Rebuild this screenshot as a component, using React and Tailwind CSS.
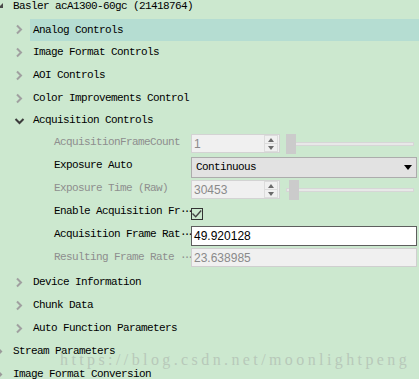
import React from 'react';

const mono = "font-['Liberation_Mono',monospace] text-[11px] tracking-[-0.6px]";
const sans = "font-['Liberation_Sans',Arial,sans-serif] text-[12px] tracking-normal";

function RootRow({ label, open }) {
  return (
    <div className="flex h-[23px] items-center text-black">
      <svg width="13" height="23" viewBox="0 0 13 23" className="shrink-0 overflow-visible">
        {open ? (
          <path d="M3 8 L3 13 L-2 13 Z" fill="#4a4a4a" />
        ) : (
          <path d="M-3 6 L2.5 11.5 L-3 17 Z" fill="#9a9a9a" />
        )}
      </svg>
      <span className="whitespace-nowrap">{label}</span>
    </div>
  );
}

function GroupRow({ label, selected }) {
  return (
    <div className="flex h-[23px] text-black">
      <svg width="30" height="23" viewBox="0 0 30 23" className="shrink-0">
        <path d="M17 7.5 L21 11.5 L17 15.5" stroke="#a0a0a0" strokeWidth="2" fill="none" />
      </svg>
      <div
        className={
          selected
            ? 'mt-px flex h-[22px] flex-1 items-center bg-[#b5ddd2] pl-[3px]'
            : 'flex flex-1 items-center pl-[3px]'
        }
      >
        <span className="whitespace-nowrap">{label}</span>
      </div>
    </div>
  );
}

function Dots() {
  return <span className="tracking-[-3px]">···</span>;
}

function PropRow({ label, dim, children }) {
  return (
    <div className="flex h-[23px] items-center pl-[54px]">
      <div className={`w-[137px] shrink-0 whitespace-nowrap ${dim ? 'text-[#8e8e8e]' : 'text-black'}`}>
        {label}
      </div>
      <div className="flex w-[226px] items-center">{children}</div>
    </div>
  );
}

function SpinBox({ value }) {
  return (
    <div className="mt-[2px] flex h-[19px] w-[89px] shrink-0 items-center border border-[#d3d3d3] bg-[#f0f0f0]">
      <span className={`flex-1 pl-[2px] text-[#8a8a8a] ${sans}`}>{value}</span>
      <div className="mr-px flex h-[17px] w-[14px] flex-col border border-[#dcdcdc]">
        <div className="flex flex-1 items-center justify-center border-b border-[#dcdcdc]">
          <svg width="6" height="4" viewBox="0 0 6 4">
            <path d="M0 4 L3 0 L6 4 Z" fill="#6b6b6b" />
          </svg>
        </div>
        <div className="flex flex-1 items-center justify-center">
          <svg width="6" height="4" viewBox="0 0 6 4">
            <path d="M0 0 L6 0 L3 4 Z" fill="#6b6b6b" />
          </svg>
        </div>
      </div>
    </div>
  );
}

function Slider({ offset }) {
  return (
    <div className="relative ml-[6px] mr-[3px] mt-[2px] flex h-[20px] flex-1 items-center">
      <div className="h-[4px] w-full border border-[#d6d6d6] bg-[#e8e8e8]" />
      <div className="absolute top-0 h-[20px] w-[10px] bg-[#cbcbcb]" style={{ left: offset }} />
    </div>
  );
}

export default function App() {
  return (
    <div className={`relative h-[379px] w-[419px] overflow-hidden bg-[#cce8cf] ${mono}`}>
      <div className="mt-[-5px]">
        <RootRow label="Basler acA1300-60gc (21418764)" open />
        <GroupRow label="Analog Controls" selected />
        <GroupRow label="Image Format Controls" />
        <GroupRow label="AOI Controls" />
        <GroupRow label="Color Improvements Control" />

        <div className="flex h-[21px] text-black">
          <svg width="30" height="21" viewBox="0 0 30 21" className="shrink-0">
            <path d="M15.5 9 L19.5 13 L23.5 9" stroke="#3c3c3c" strokeWidth="2" fill="none" />
          </svg>
          <div className="flex flex-1 items-center pl-[3px]">Acquisition Controls</div>
        </div>

        {/* property grid */}
        <div className="mb-[2px]">
          <PropRow label="AcquisitionFrameCount" dim>
            <SpinBox value="1" />
            <Slider offset={0} />
          </PropRow>
          <PropRow label="Exposure Auto">
            <div className="mt-[4px] flex h-[21px] w-full items-center justify-between border border-[#acacac] bg-[#e2e2e2] pl-[4px] pr-[4px] text-black">
              <span>Continuous</span>
              <svg width="8" height="5" viewBox="0 0 8 5">
                <path d="M0 0 H8 L4 5 Z" fill="#000" />
              </svg>
            </div>
          </PropRow>
          <PropRow label="Exposure Time (Raw)" dim>
            <SpinBox value="30453" />
            <Slider offset={3} />
          </PropRow>
          <PropRow
            label={
              <>
                Enable Acquisition Fr<Dots />
              </>
            }
          >
            <div className="mt-[5px] flex h-[12px] w-[12px] items-center justify-center border border-[#333]">
              <svg width="10" height="10" viewBox="0 0 10 10">
                <path d="M0.5 4.5 L3.7 7.7 L9.2 1.5" stroke="#444" strokeWidth="1.4" fill="none" />
              </svg>
            </div>
          </PropRow>
          <PropRow
            label={
              <>
                Acquisition Frame Rat<Dots />
              </>
            }
          >
            <div className="mt-[2px] flex h-[20px] w-full items-center border border-[#5e5e5e] bg-white pl-[2px]">
              <span className={`text-black ${sans}`}>49.920128</span>
            </div>
          </PropRow>
          <PropRow
            dim
            label={
              <>
                Resulting Frame Rate <Dots />
              </>
            }
          >
            <div className="flex h-[19px] w-full items-center border border-[#cfcfcf] bg-[#f0f0f0] pl-[2px]">
              <span className={`text-[#8a8a8a] ${sans}`}>23.638985</span>
            </div>
          </PropRow>
        </div>

        <GroupRow label="Device Information" />
        <GroupRow label="Chunk Data" />
        <GroupRow label="Auto Function Parameters" />
        <RootRow label="Stream Parameters" />
        <RootRow label="Image Format Conversion" />
      </div>

      {/* watermark */}
      <div className="pointer-events-none absolute left-[60px] top-[351px] whitespace-nowrap font-['Liberation_Serif',serif] text-[16px] leading-[17px] tracking-[3.4px] text-[#b8c9ba]">
        https://blog.csdn.net/moonlightpeng
      </div>
    </div>
  );
}
